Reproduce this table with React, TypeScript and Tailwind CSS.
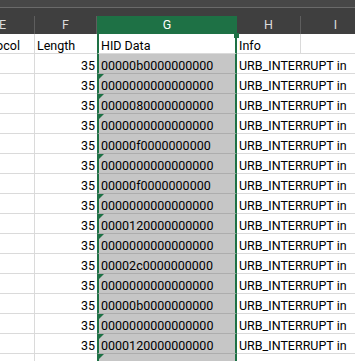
import React from "react";

const rows = [
  "00000b0000000000",
  "0000000000000000",
  "0000080000000000",
  "0000000000000000",
  "00000f0000000000",
  "0000000000000000",
  "00000f0000000000",
  "0000000000000000",
  "0000120000000000",
  "0000000000000000",
  "00002c0000000000",
  "0000000000000000",
  "00000b0000000000",
  "0000000000000000",
  "0000120000000000",
];

const Triangle = () => (
  <div className="absolute left-0 top-0 w-0 h-0 border-t-[5px] border-t-[#1e7145] border-r-[5px] border-r-transparent" />
);

const HeaderCell: React.FC<{ label: string; width: string; active?: boolean }> = ({
  label,
  width,
  active,
}) => (
  <div
    className={`${width} h-[18px] shrink-0 text-center leading-[18px] text-[12.5px] ${
      active
        ? "bg-[#1e7145] text-white"
        : "bg-[#3f3f3f] text-[#dcdcdc] border-r border-[#5e5e5e]"
    }`}
  >
    {label}
  </div>
);

export default function App() {
  return (
    <div className="w-[355px] h-[361px] overflow-hidden bg-white font-['Roboto',sans-serif] text-[12.5px] text-black">
      <div className="h-[7px] bg-[#474747]" />
      <div className="h-px bg-[#6a6a6a]" />
      <div className="h-[8px] bg-[#3f3f3f]" />

      <div className="ml-[-29px] w-[400px]">
        {/* column letters */}
        <div className="flex">
          <HeaderCell label="E" width="w-[64px]" />
          <HeaderCell label="F" width="w-[62px]" />
          <HeaderCell label="G" width="w-[140px]" active />
          <HeaderCell label="H" width="w-[64px]" />
          <HeaderCell label="I" width="w-[70px]" />
        </div>

        {/* row 1 */}
        <div className="flex h-[20px]">
          <div className="w-[64px] shrink-0 border-r border-b border-[#dadada] pl-[2px] pt-[4px] leading-[15px] whitespace-nowrap overflow-hidden">
            Protocol
          </div>
          <div className="w-[62px] shrink-0 border-b border-[#dadada] pl-[2px] pt-[4px] leading-[15px]">
            Length
          </div>
          <div className="relative w-[140px] shrink-0 border-x-2 border-x-[#1e7145] border-b border-b-[#dadada] pl-[2px] pt-[4px] leading-[15px]">
            HID Data
            <div className="absolute right-[-4px] top-[-1px] w-[5px] h-[5px] bg-[#1e7145]" />
          </div>
          <div className="w-[64px] shrink-0 border-r border-b border-[#dadada] pl-[2px] pt-[4px] leading-[15px]">
            Info
          </div>
          <div className="w-[70px] shrink-0 border-b border-[#dadada]" />
        </div>

        {/* data rows */}
        {rows.map((hex, i) => (
          <div key={i} className="flex h-[20px]">
            <div className="w-[64px] shrink-0 border-r border-b border-[#dadada]" />
            <div className="w-[62px] shrink-0 border-b border-[#dadada] pr-[2px] pt-[4px] leading-[15px] text-right">
              35
            </div>
            <div className="relative w-[140px] shrink-0 border-x-2 border-x-[#1e7145] border-b border-b-[#adadad] bg-[#c6c6c6] pl-[2px] pt-[4px] leading-[15px]">
              {/^\d+$/.test(hex) && <Triangle />}
              {hex}
            </div>
            <div className="w-[134px] shrink-0 border-b border-[#dadada] pl-[2px] pt-[4px] leading-[15px] whitespace-nowrap">
              URB_INTERRUPT in
            </div>
          </div>
        ))}

        {/* next row, only its top edge is in view */}
        <div className="flex h-[20px]">
          <div className="w-[64px] shrink-0 border-r border-[#dadada]" />
          <div className="w-[62px] shrink-0" />
          <div className="relative w-[140px] shrink-0 border-x-2 border-x-[#1e7145] bg-[#c6c6c6]">
            <Triangle />
          </div>
          <div className="w-[134px] shrink-0" />
        </div>
      </div>
    </div>
  );
}
